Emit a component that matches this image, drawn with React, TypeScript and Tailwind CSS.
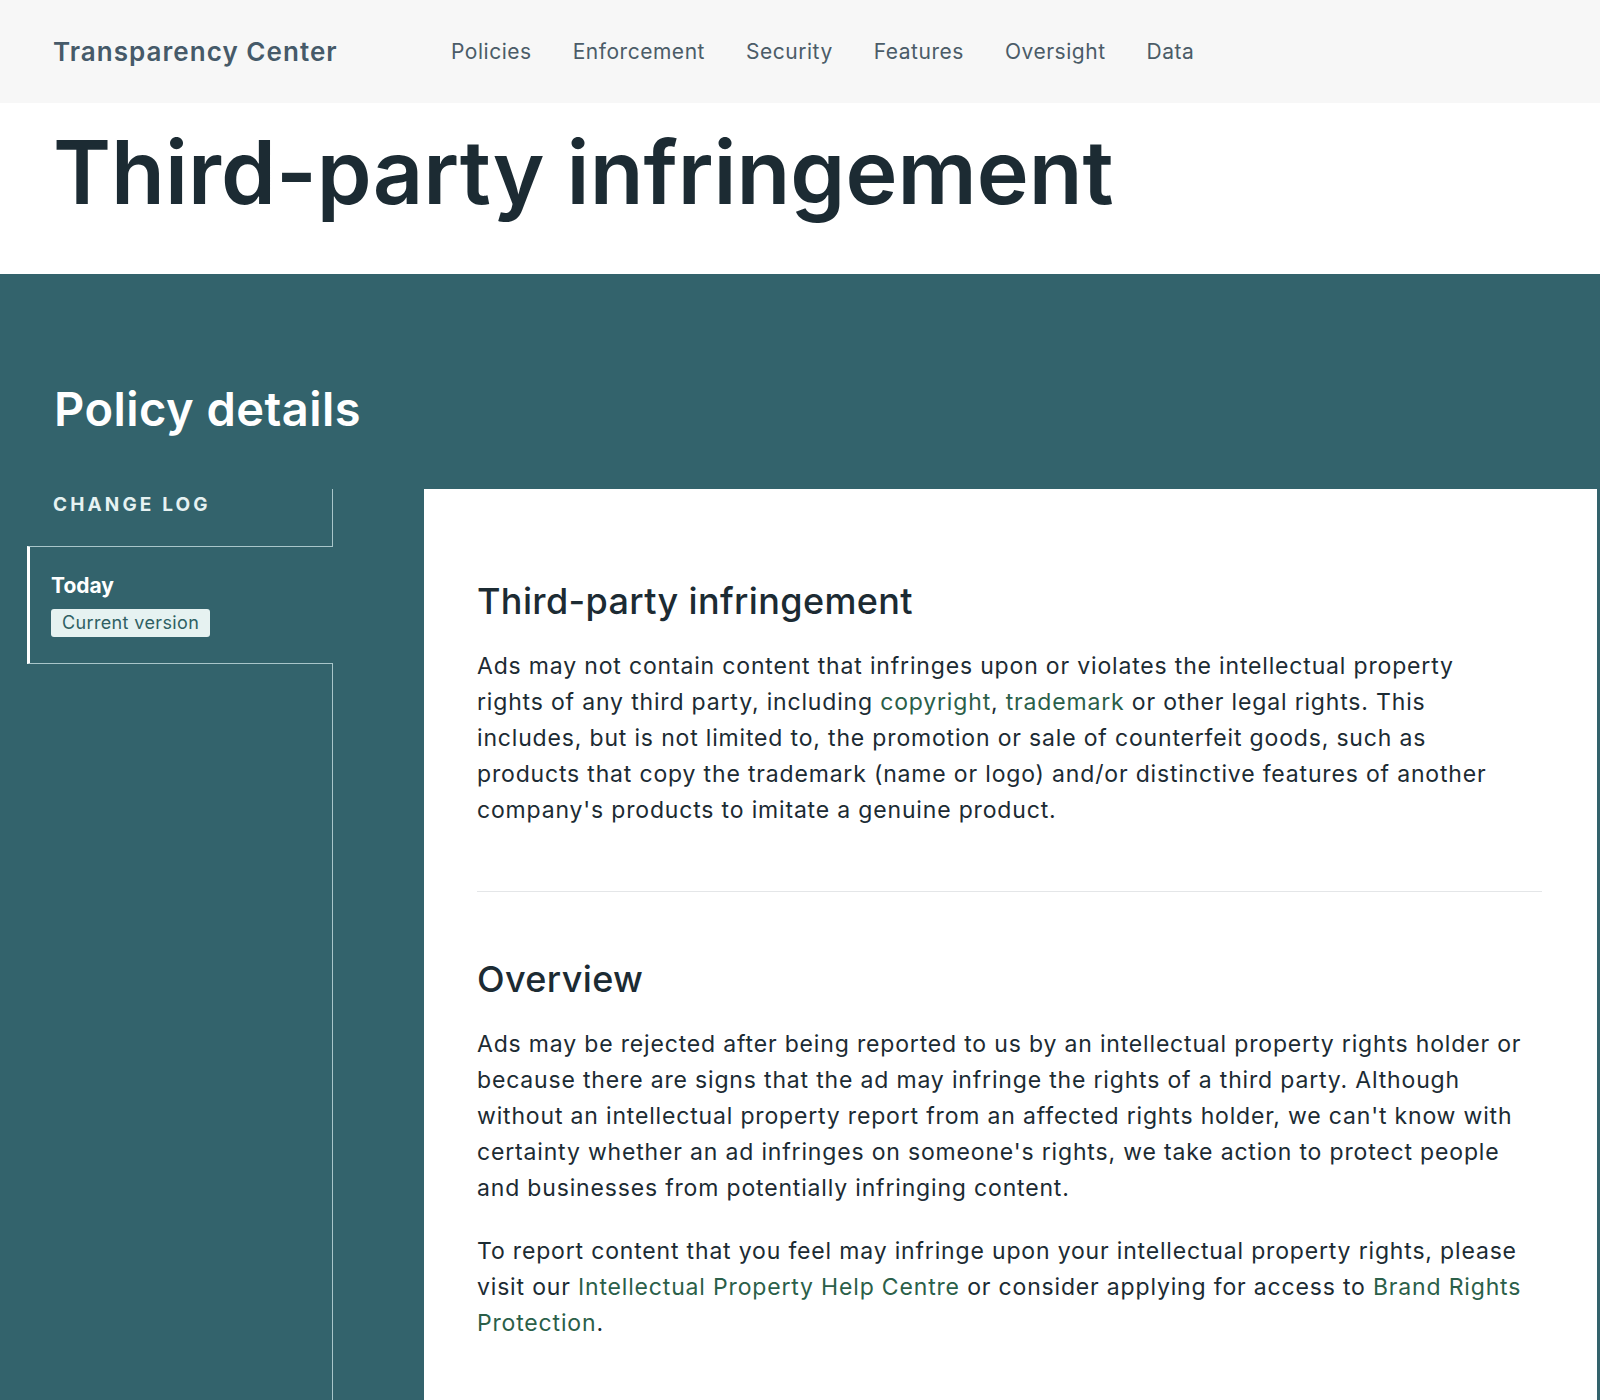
import React from "react";

const font = { fontFamily: "Inter, 'Noto Sans', sans-serif" };

export default function App() {
  const link = "text-[#2b5f49]";
  return (
    <div className="min-h-[1400px] bg-[#33636c] text-[#1c2b33]" style={font}>
      <header className="flex h-[103px] items-center bg-[#f7f7f7] pl-[53px]">
        <div className="w-[398px] text-[26px] font-semibold tracking-[0.04em] text-[#465a69]">
          Transparency Center
        </div>
        <nav className="flex gap-[41px] text-[21px] tracking-[0.025em] text-[#4b5c68]">
          <span>Policies</span>
          <span>Enforcement</span>
          <span>Security</span>
          <span>Features</span>
          <span>Oversight</span>
          <span>Data</span>
        </nav>
      </header>
      <section className="h-[171px] bg-white pl-[53px] pt-[14px]">
        <h1 className="text-[88px] font-semibold leading-[110px] text-[#1c2b33]">
          Third-party infringement
        </h1>
      </section>
      <section className="pl-[27px] pt-[105px]">
        <h2 className="ml-[27px] text-[47px] font-semibold leading-[60px] tracking-[0.01em] text-white">
          Policy details
        </h2>
        <div className="mt-[50px] flex">
          <aside className="flex w-[306px] shrink-0 flex-col">
            <div className="h-[57px] border-r border-[#a9c6ca] pl-[26px] pt-[4px] text-[19px] font-bold uppercase leading-[24px] tracking-[0.165em] text-[#e6f2f2]">
              Change log
            </div>
            <div className="h-[118px] border-y border-l-[3px] border-y-[#a9c6ca] border-l-white pl-[21px] pt-[25px]">
              <div className="text-[21px] font-bold leading-[28px] text-white">Today</div>
              <span className="mt-[9px] inline-block rounded-[3px] bg-[#e6f2f1] px-[11px] text-[18px] leading-[28px] tracking-[0.02em] text-[#2f5f63]">
                Current version
              </span>
            </div>
            <div className="h-[740px] border-r border-[#a9c6ca]"></div>
          </aside>
          <main className="ml-[91px] mr-[3px] flex-1 bg-white pl-[53px] pr-[55px] pt-[90px] text-[23px] leading-[36px] tracking-[0.036em]">
            <h3 className="text-[36px] font-medium leading-[44px] tracking-[0.01em]">Third-party infringement</h3>
            <p className="mt-[25px] max-w-[1046px]">
              Ads may not contain content that infringes upon or violates the intellectual property rights of any third party, including{" "}
              <span className={link}>copyright</span>, <span className={link}>trademark</span> or other legal rights. This includes, but is not limited to, the promotion or sale of counterfeit goods, such as products that copy the trademark (name or logo) and/or distinctive features of another company's products to imitate a genuine product.
            </p>
            <div className="mt-[63px] h-px bg-[#e4e6e8]"></div>
            <h3 className="mt-[65px] text-[36px] font-medium leading-[44px] tracking-[0.01em]">Overview</h3>
            <p className="mt-[25px] max-w-[1046px]">
              Ads may be rejected after being reported to us by an intellectual property rights holder or because there are signs that the ad may infringe the rights of a third party. Although without an intellectual property report from an affected rights holder, we can't know with certainty whether an ad infringes on someone's rights, we take action to protect people and businesses from potentially infringing content.
            </p>
            <p className="mt-[27px] max-w-[1046px] pb-[80px]">
              To report content that you feel may infringe upon your intellectual property rights, please visit our{" "}
              <span className={link}>Intellectual Property Help Centre</span> or consider applying for access to{" "}
              <span className={link}>Brand Rights Protection</span>.
            </p>
          </main>
        </div>
      </section>
    </div>
  );
}
